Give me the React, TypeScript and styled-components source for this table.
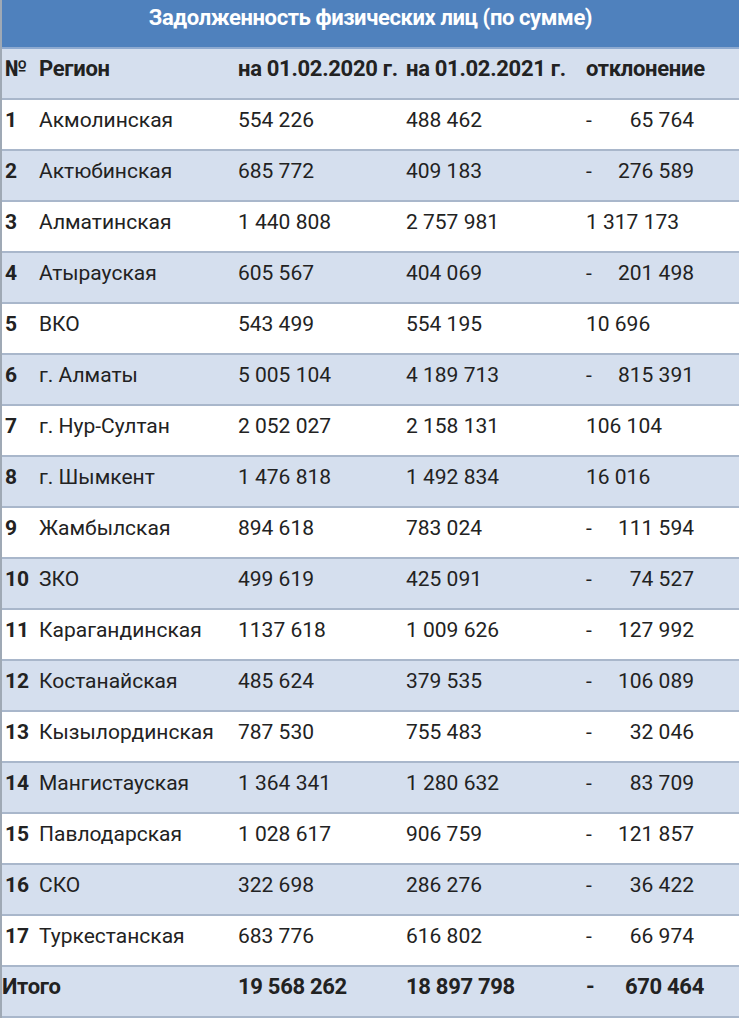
import styled, { createGlobalStyle } from 'styled-components';

const GlobalStyle = createGlobalStyle`
  body {
    margin: 0;
    background: #ffffff;
    font-family: Roboto, "Noto Sans", sans-serif;
    color: #222222;
  }
`;

const Table = styled.div`
  width: 739px;
  border-left: 2px solid #9fa9b5;
  box-sizing: border-box;
`;

const Title = styled.div`
  height: 49px;
  box-sizing: border-box;
  padding-top: 5px;
  background: #4f81bd;
  color: #ffffff;
  font-weight: 700;
  font-size: 22px;
  letter-spacing: -0.4px;
  text-align: center;
  border-bottom: 2px solid #8eaad0;
`;

const Row = styled.div<{ $striped?: boolean; $bold?: boolean }>`
  display: grid;
  grid-template-columns: 37px 199px 168px 180px 1fr;
  height: 51px;
  box-sizing: border-box;
  padding-top: 8px;
  background: ${(p) => (p.$striped ? '#d5dfee' : '#ffffff')};
  border-bottom: 2px solid #a9b7cb;
  font-size: ${(p) => (p.$bold ? '22px' : '21px')};
  line-height: 24px;
  font-weight: ${(p) => (p.$bold ? 700 : 400)};
  letter-spacing: ${(p) => (p.$bold ? '-0.3px' : '0')};
`;

const Cell = styled.div<{ $span?: number }>`
  white-space: nowrap;
  grid-column: span ${(p) => p.$span ?? 1};
`;

const NumCell = styled(Cell)`
  padding-left: 3px;
  font-weight: 700;
`;

const Deviation = styled.div`
  display: flex;
  white-space: nowrap;
`;

const Dash = styled.span`
  width: 14px;
`;

const DevValue = styled.span<{ $width: number }>`
  width: ${(p) => p.$width}px;
  text-align: right;
`;

type Item = [string, string, string, string];

const rows: Item[] = [
  ['Акмолинская', '554 226', '488 462', '-65 764'],
  ['Актюбинская', '685 772', '409 183', '-276 589'],
  ['Алматинская', '1 440 808', '2 757 981', '1 317 173'],
  ['Атырауская', '605 567', '404 069', '-201 498'],
  ['ВКО', '543 499', '554 195', '10 696'],
  ['г. Алматы', '5 005 104', '4 189 713', '-815 391'],
  ['г. Нур-Султан', '2 052 027', '2 158 131', '106 104'],
  ['г. Шымкент', '1 476 818', '1 492 834', '16 016'],
  ['Жамбылская', '894 618', '783 024', '-111 594'],
  ['ЗКО', '499 619', '425 091', '-74 527'],
  ['Карагандинская', '1137 618', '1 009 626', '-127 992'],
  ['Костанайская', '485 624', '379 535', '-106 089'],
  ['Кызылординская', '787 530', '755 483', '-32 046'],
  ['Мангистауская', '1 364 341', '1 280 632', '-83 709'],
  ['Павлодарская', '1 028 617', '906 759', '-121 857'],
  ['СКО', '322 698', '286 276', '-36 422'],
  ['Туркестанская', '683 776', '616 802', '-66 974'],
];

function DeviationCell({ value, width }: { value: string; width: number }) {
  if (!value.startsWith('-')) return <Cell>{value}</Cell>;
  return (
    <Deviation>
      <Dash>-</Dash>
      <DevValue $width={width}>{value.slice(1)}</DevValue>
    </Deviation>
  );
}

export default function App() {
  return (
    <>
      <GlobalStyle />
      <Table>
        <Title>Задолженность физических лиц (по сумме)</Title>
        <Row $striped $bold>
          <NumCell>№</NumCell>
          <Cell>Регион</Cell>
          <Cell>на 01.02.2020 г.</Cell>
          <Cell>на 01.02.2021 г.</Cell>
          <Cell>отклонение</Cell>
        </Row>
        {rows.map(([region, a, b, dev], i) => (
          <Row key={region} $striped={i % 2 === 1}>
            <NumCell>{i + 1}</NumCell>
            <Cell>{region}</Cell>
            <Cell>{a}</Cell>
            <Cell>{b}</Cell>
            <DeviationCell value={dev} width={94} />
          </Row>
        ))}
        <Row $striped $bold>
          <Cell $span={2}>Итого</Cell>
          <Cell>19 568 262</Cell>
          <Cell>18 897 798</Cell>
          <DeviationCell value="-670 464" width={104} />
        </Row>
      </Table>
    </>
  );
}
